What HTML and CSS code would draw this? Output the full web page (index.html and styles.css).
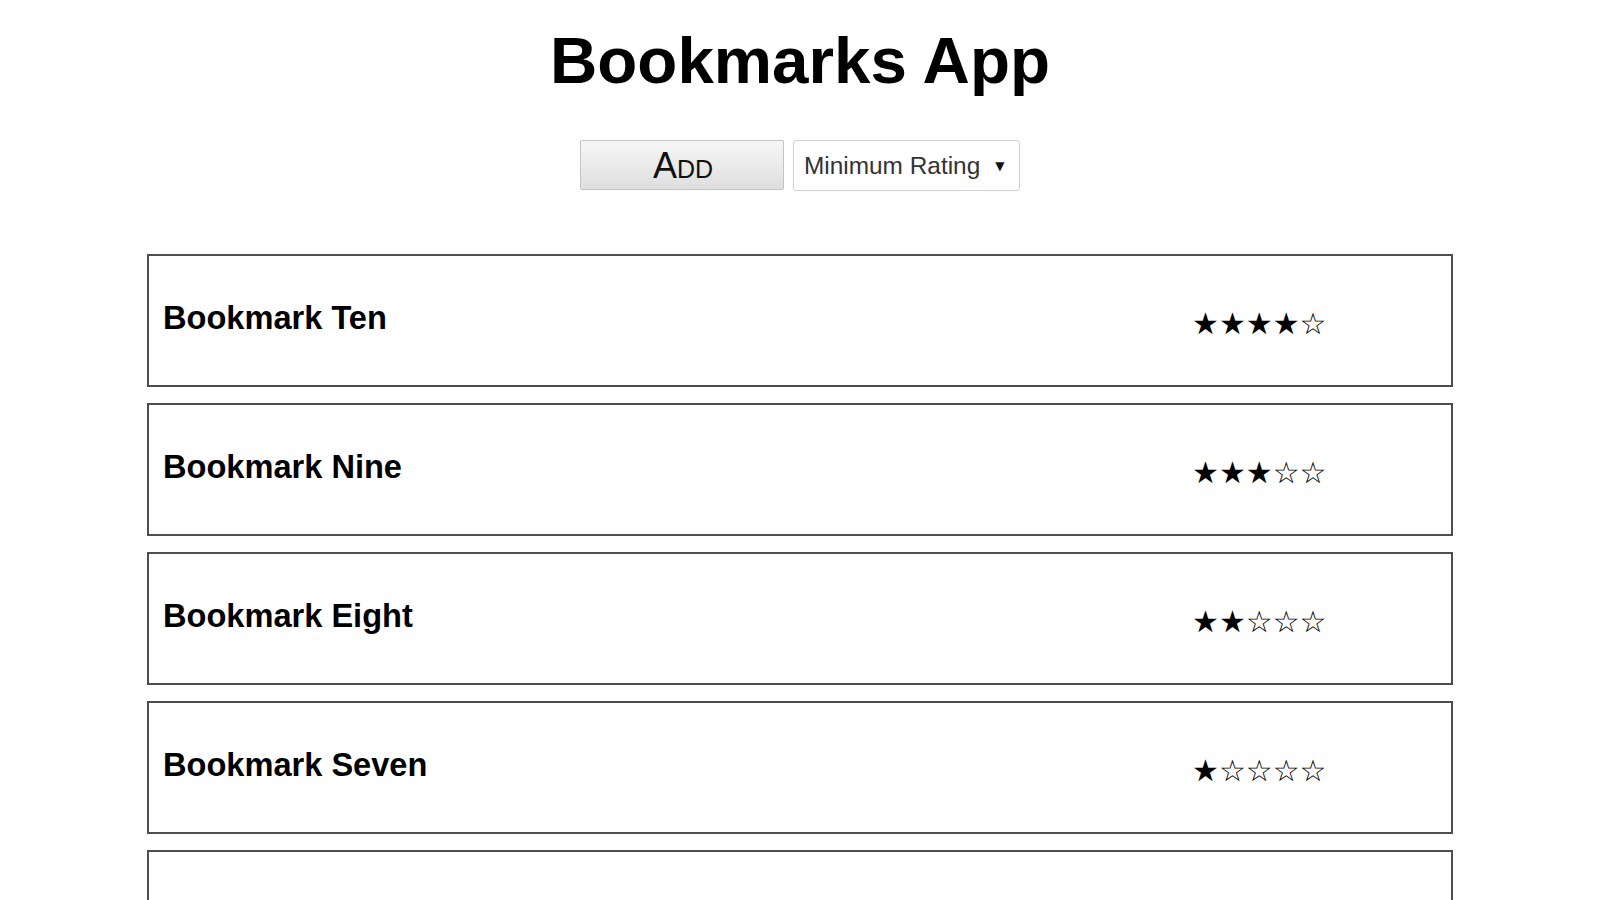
FILE: index.html
```html
<!DOCTYPE html>
<html>
<head>
<meta charset="utf-8">
<title>Bookmarks App</title>
<link rel="stylesheet" href="styles.css">
</head>
<body>
<div class="app">
  <h1 class="title">Bookmarks App</h1>
  <div class="controls">
    <button class="add-btn">Add</button>
    <div class="filter">
      <span class="filter-label">Minimum Rating</span>
      <span class="filter-arrow">▼</span>
    </div>
  </div>
  <ul class="list">
    <li class="item"><span class="name">Bookmark Ten</span><span class="rating">★★★★☆</span></li>
    <li class="item"><span class="name">Bookmark Nine</span><span class="rating">★★★☆☆</span></li>
    <li class="item"><span class="name">Bookmark Eight</span><span class="rating">★★☆☆☆</span></li>
    <li class="item"><span class="name">Bookmark Seven</span><span class="rating">★☆☆☆☆</span></li>
    <li class="item"><span class="name">Bookmark Six</span><span class="rating">★★★★★</span></li>
  </ul>
</div>
</body>
</html>
```

FILE: styles.css
```css
html, body {
  margin: 0;
  padding: 0;
  background: #fff;
}
body {
  font-family: "Liberation Sans", Arial, sans-serif;
  color: #000;
  overflow: hidden;
  height: 900px;
}
.app {
  display: flex;
  flex-direction: column;
  align-items: center;
}
.title {
  margin: 23px 0 0;
  font-size: 65.5px;
  font-weight: bold;
  line-height: 75px;
}
.controls {
  display: flex;
  gap: 9px;
  margin-top: 42px;
}
.add-btn {
  width: 204px;
  height: 50px;
  box-sizing: border-box;
  border: 1px solid #c4c4c4;
  border-radius: 2px;
  background: linear-gradient(#f6f6f6, #dedede);
  font-family: "Liberation Sans", Arial, sans-serif;
  font-size: 36px;
  line-height: 1;
  font-variant: small-caps;
  color: #111;
  padding: 1px 0 0 2px;
}
.filter {
  width: 227px;
  height: 51px;
  box-sizing: border-box;
  border: 1px solid #d0d0d0;
  border-radius: 3px;
  background: #fff;
  display: flex;
  align-items: center;
  padding: 0 10px 0 10px;
  gap: 15px;
  font-size: 24.4px;
  color: #333;
}
.filter-arrow {
  font-size: 12px;
  color: #111;
  font-family: "DejaVu Sans", sans-serif;
}
.list {
  list-style: none;
  margin: 63px 0 0;
  padding: 0;
  width: 1306px;
  display: flex;
  flex-direction: column;
  gap: 16px;
}
.item {
  box-sizing: border-box;
  height: 133px;
  border: 2px solid #4e4e4e;
  display: grid;
  grid-template-columns: 1fr 259px;
  align-items: center;
  padding-left: 14px;
}
.name {
  font-size: 32.6px;
  font-weight: bold;
  margin-top: -6px;
}
.rating {
  font-family: "DejaVu Sans", sans-serif;
  font-size: 30px;
  margin-top: 6px;
}
```
